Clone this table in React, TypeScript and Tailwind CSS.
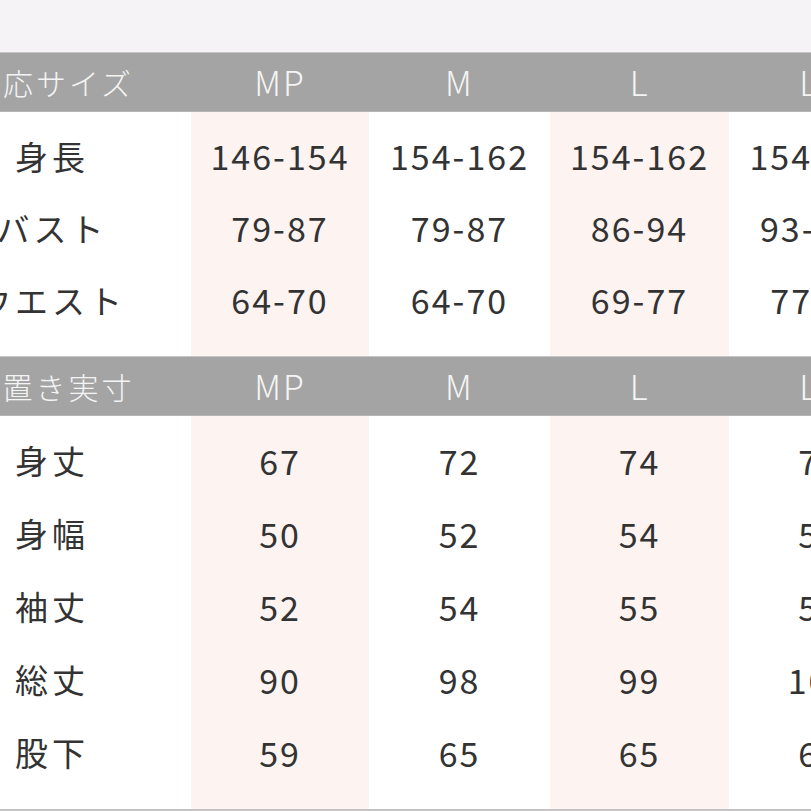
import React from 'react';

// ===== SIZE CHART =====

type Section = {
  title: string;
  sizes: string[];
  rows: { label: string; values: string[] }[];
  rowH: string;
};

const COL_W = ['w-[278px]', 'w-[178px]', 'w-[181px]', 'w-[179px]', 'w-[180px]'];
const COL_BG = ['bg-white', 'bg-[#fdf4f1]', 'bg-white', 'bg-[#fdf4f1]', 'bg-white'];

const sections: Section[] = [
  {
    title: '対応サイズ',
    sizes: ['MP', 'M', 'L', 'LL'],
    rowH: 'h-[72px]',
    rows: [
      { label: '身長', values: ['146-154', '154-162', '154-162', '154-162'] },
      { label: 'バスト', values: ['79-87', '79-87', '86-94', '93-101'] },
      { label: 'ウエスト', values: ['64-70', '64-70', '69-77', '77-85'] },
    ],
  },
  {
    title: '平置き実寸',
    sizes: ['MP', 'M', 'L', 'LL'],
    rowH: 'h-[73px]',
    rows: [
      { label: '身丈', values: ['67', '72', '74', '76'] },
      { label: '身幅', values: ['50', '52', '54', '56'] },
      { label: '袖丈', values: ['52', '54', '55', '56'] },
      { label: '総丈', values: ['90', '98', '99', '100'] },
      { label: '股下', values: ['59', '65', '65', '66'] },
    ],
  },
];

const font = "font-['Noto_Sans_CJK_JP',sans-serif]";

const HeaderRow: React.FC<{ title: string; sizes: string[] }> = ({ title, sizes }) => (
  <div className="flex h-[60px] bg-[#a4a4a4] border-t border-[#c6c6c6] border-b border-b-[#b4b4b4]">
    <div className={`${COL_W[0]} shrink-0 flex items-center justify-center text-[30px] tracking-[3px] text-[#f4f4f4] font-light leading-none`}>
      {title}
    </div>
    {sizes.map((s, i) => (
      <div
        key={i}
        className={`${COL_W[i + 1]} shrink-0 flex items-center justify-center text-[34px] tracking-[2px] text-[#f4f4f4] font-light leading-none`}
      >
        {s}
      </div>
    ))}
  </div>
);

const Body: React.FC<{ section: Section }> = ({ section }) => {
  const cols = [section.rows.map((r) => r.label), ...section.sizes.map((_, i) => section.rows.map((r) => r.values[i]))];
  return (
    <div className="flex">
      {cols.map((cells, ci) => (
        <div key={ci} className={`${COL_W[ci]} ${COL_BG[ci]} shrink-0 flex flex-col pt-[8px] pb-[20px]`}>
          {cells.map((c, ri) => (
            <div
              key={ri}
              className={`${section.rowH} flex items-center justify-center text-[#333333] leading-none ${
                ci === 0 ? 'text-[33px] tracking-[4px]' : 'text-[34px] tracking-[2px]'
              }`}
            >
              {c}
            </div>
          ))}
        </div>
      ))}
    </div>
  );
};

const App: React.FC = () => {
  return (
    <div className={`w-[811px] h-[811px] overflow-hidden bg-[#f5f3f6] ${font}`}>
      <div className="h-[52px]" />
      <div className="ml-[-87px] w-[996px]">
        {sections.map((s, i) => (
          <div key={i}>
            <HeaderRow title={s.title} sizes={s.sizes} />
            <Body section={s} />
          </div>
        ))}
        <div className="h-[4px] bg-[#c4c4c4]" />
      </div>
    </div>
  );
};

export default App;
